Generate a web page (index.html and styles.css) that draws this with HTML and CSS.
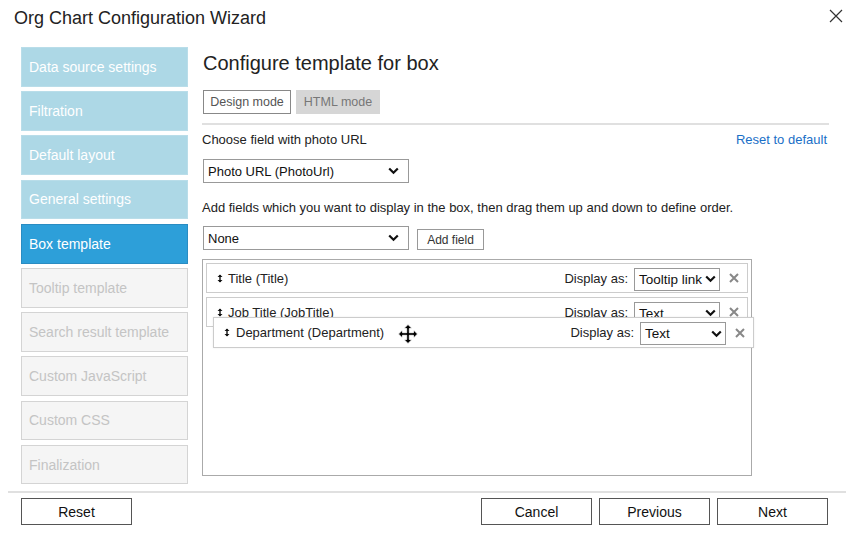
FILE: index.html
```html
<!DOCTYPE html>
<html>
<head>
<meta charset="utf-8">
<link rel="stylesheet" href="styles.css">
</head>
<body>
<div class="dialog">
  <header class="header">
    <h1 class="title">Org Chart Configuration Wizard</h1>
    <svg class="close" width="14" height="14" viewBox="0 0 14 14"><path d="M1 1L13 13M13 1L1 13" stroke="#333" stroke-width="1.2" fill="none"/></svg>
  </header>
  <div class="body">
    <nav class="steps">
      <div class="step done">Data source settings</div>
      <div class="step done">Filtration</div>
      <div class="step done">Default layout</div>
      <div class="step done">General settings</div>
      <div class="step active">Box template</div>
      <div class="step off">Tooltip template</div>
      <div class="step off">Search result template</div>
      <div class="step off">Custom JavaScript</div>
      <div class="step off">Custom CSS</div>
      <div class="step off">Finalization</div>
    </nav>
    <main class="main">
      <h2 class="heading">Configure template for box</h2>
      <div class="modes">
        <div class="mode mode-on">Design mode</div>
        <div class="mode mode-off">HTML mode</div>
      </div>
      <div class="rule"></div>
      <div class="label-row">
        <span>Choose field with photo URL</span>
        <a class="link">Reset to default</a>
      </div>
      <div class="select wide">Photo URL (PhotoUrl)<svg class="chev" width="11" height="8" viewBox="0 0 11 8"><path d="M1.2 1.5L5.5 5.8L9.8 1.5" stroke="#111" stroke-width="2.2" fill="none"/></svg></div>
      <div class="hint">Add fields which you want to display in the box, then drag them up and down to define order.</div>
      <div class="add-row">
        <div class="select wide">None<svg class="chev" width="11" height="8" viewBox="0 0 11 8"><path d="M1.2 1.5L5.5 5.8L9.8 1.5" stroke="#111" stroke-width="2.2" fill="none"/></svg></div>
        <div class="btn-small">Add field</div>
      </div>
      <div class="list">
        <div class="field">
          <span class="fname"><svg class="grip" width="6" height="9" viewBox="0 0 6 9"><path d="M3 1V8" stroke="#111" stroke-width="1.4"/><path d="M0.5 3L3 0.5L5.5 3ZM0.5 6L3 8.5L5.5 6Z" fill="#111"/></svg>Title (Title)</span>
          <span class="disp">Display as:</span>
          <div class="select small">Tooltip link<svg class="chev" width="11" height="8" viewBox="0 0 11 8"><path d="M1.2 1.5L5.5 5.8L9.8 1.5" stroke="#111" stroke-width="2.2" fill="none"/></svg></div>
          <svg class="remove" width="10" height="10" viewBox="0 0 10 10"><path d="M1 1L9 9M9 1L1 9" stroke="#888" stroke-width="2"/></svg>
        </div>
        <div class="field">
          <span class="fname"><svg class="grip" width="6" height="9" viewBox="0 0 6 9"><path d="M3 1V8" stroke="#111" stroke-width="1.4"/><path d="M0.5 3L3 0.5L5.5 3ZM0.5 6L3 8.5L5.5 6Z" fill="#111"/></svg>Job Title (JobTitle)</span>
          <span class="disp">Display as:</span>
          <div class="select small">Text<svg class="chev" width="11" height="8" viewBox="0 0 11 8"><path d="M1.2 1.5L5.5 5.8L9.8 1.5" stroke="#111" stroke-width="2.2" fill="none"/></svg></div>
          <svg class="remove" width="10" height="10" viewBox="0 0 10 10"><path d="M1 1L9 9M9 1L1 9" stroke="#888" stroke-width="2"/></svg>
        </div>
        <div class="field dragging">
          <span class="fname"><svg class="grip" width="6" height="9" viewBox="0 0 6 9"><path d="M3 1V8" stroke="#111" stroke-width="1.4"/><path d="M0.5 3L3 0.5L5.5 3ZM0.5 6L3 8.5L5.5 6Z" fill="#111"/></svg>Department (Department)</span>
          <span class="disp">Display as:</span>
          <div class="select small">Text<svg class="chev" width="11" height="8" viewBox="0 0 11 8"><path d="M1.2 1.5L5.5 5.8L9.8 1.5" stroke="#111" stroke-width="2.2" fill="none"/></svg></div>
          <svg class="remove" width="10" height="10" viewBox="0 0 10 10"><path d="M1 1L9 9M9 1L1 9" stroke="#888" stroke-width="2"/></svg>
        </div>
        <svg class="move" width="20" height="20" viewBox="0 0 20 20"><path d="M10 0.5L14 4.5H11.3V8.7H15.5V6L19.5 10L15.5 14V11.3H11.3V15.5H14L10 19.5L6 15.5H8.7V11.3H4.5V14L0.5 10L4.5 6V8.7H8.7V4.5H6Z" fill="#000" stroke="#fff" stroke-width="0.8"/></svg>
      </div>
    </main>
  </div>
  <footer class="footer">
    <div class="btn">Reset</div>
    <div class="footer-right">
      <div class="btn">Cancel</div>
      <div class="btn">Previous</div>
      <div class="btn">Next</div>
    </div>
  </footer>
</div>
</body>
</html>
```

FILE: styles.css
```css
* { box-sizing: border-box; }
html, body { margin: 0; padding: 0; background: #fff; }
body {
  width: 854px;
  height: 538px;
  font-family: "Liberation Sans", Arial, sans-serif;
  font-size: 13px;
  color: #222;
  overflow: hidden;
}
.dialog { width: 854px; height: 538px; display: flex; flex-direction: column; }
.header {
  height: 47px;
  display: flex;
  align-items: flex-start;
  justify-content: space-between;
  padding: 7px 10px 0 14px;
}
.title { margin: 0; font-size: 18px; font-weight: normal; color: #222; line-height: 22px; }
.close { margin-top: 2px; margin-right: 1px; }
.body { display: flex; height: 438px; }
.steps {
  width: 167px;
  margin-left: 21px;
  display: flex;
  flex-direction: column;
  gap: 4.4px;
}
.step {
  height: 39.8px;
  flex: none;
  display: flex;
  align-items: center;
  padding-left: 7px;
  font-size: 14px;
  border: 1px solid transparent;
}
.step.done { background: #add8e6; color: #fff; border-color: #b9dde9; }
.step.active { background: #2d9fd9; color: #fff; border-color: #2a8cc2; }
.step.off { background: #f5f5f5; color: #c4c4c4; border-color: #d4d4d4; }
.main { margin-left: 14px; width: 627px; display: flex; flex-direction: column; }
.heading { margin: 4px 0 0 1px; font-size: 20px; font-weight: normal; line-height: 24px; color: #222; }
.modes { display: flex; gap: 5px; margin-top: 15px; margin-left: 1px; }
.mode { height: 24px; display: flex; align-items: center; justify-content: center; font-size: 12.5px; white-space: nowrap; }
.mode-on { border: 1px solid #888; background: #fff; color: #555; width: 88px; }
.mode-off { background: #d6d6d6; color: #777; width: 84px; border: 1px solid #d6d6d6; }
.rule { height: 2px; background: #e0e0e0; margin-top: 9px; }
.label-row { display: flex; justify-content: space-between; margin-top: 6px; line-height: 17px; padding-right: 2px; }
.link { color: #1a6fc7; }
.select {
  display: flex;
  align-items: center;
  justify-content: space-between;
  border: 1px solid #999;
  background: #fff;
  color: #111;
  padding: 0 9px 0 4px;
  white-space: nowrap;
}
.select.wide { width: 206px; height: 24px; margin-left: 1px; margin-top: 11px; }
.hint { margin-top: 16px; line-height: 17px; }
.add-row { display: flex; align-items: flex-end; gap: 8px; margin-top: 10px; }
.add-row .select.wide { margin-top: 0; }
.btn-small {
  height: 21px;
  width: 67px;
  border: 1px solid #999;
  display: flex;
  align-items: center;
  justify-content: center;
  color: #333;
  font-size: 12px;
}
.list {
  position: relative;
  margin-top: 9px;
  width: 550px;
  height: 217px;
  border: 1px solid #aaa;
  padding: 3px;
  display: flex;
  flex-direction: column;
  gap: 4px;
}
.field {
  height: 30px;
  border: 1px solid #ccc;
  background: #fff;
  display: flex;
  align-items: center;
  padding: 0 8px 0 10px;
}
.fname { flex: 1; display: flex; align-items: center; gap: 5px; }
.disp { margin-right: 6px; }
.select.small { width: 86px; height: 23px; margin-top: 2px; padding: 0 3px 0 4px; font-size: 13.5px; }
.remove { margin-left: 9px; }
.field.dragging {
  position: absolute;
  left: 10px;
  top: 57px;
  width: 541px;
  height: 31px;
  padding-left: 10px;
  box-shadow: 0 0 2px rgba(0,0,0,0.08);
}
.field.dragging .fname { gap: 6px; }
.move { position: absolute; left: 195px; top: 64px; }
.footer {
  margin: 6px 8px 0 8px;
  border-top: 2px solid #e0e0e0;
  padding: 5px 18px 0 13px;
  display: flex;
  justify-content: space-between;
}
.footer-right { display: flex; gap: 7px; }
.btn {
  width: 111px;
  height: 27px;
  border: 1px solid #555;
  display: flex;
  align-items: center;
  justify-content: center;
  font-size: 14px;
  color: #111;
}
```
